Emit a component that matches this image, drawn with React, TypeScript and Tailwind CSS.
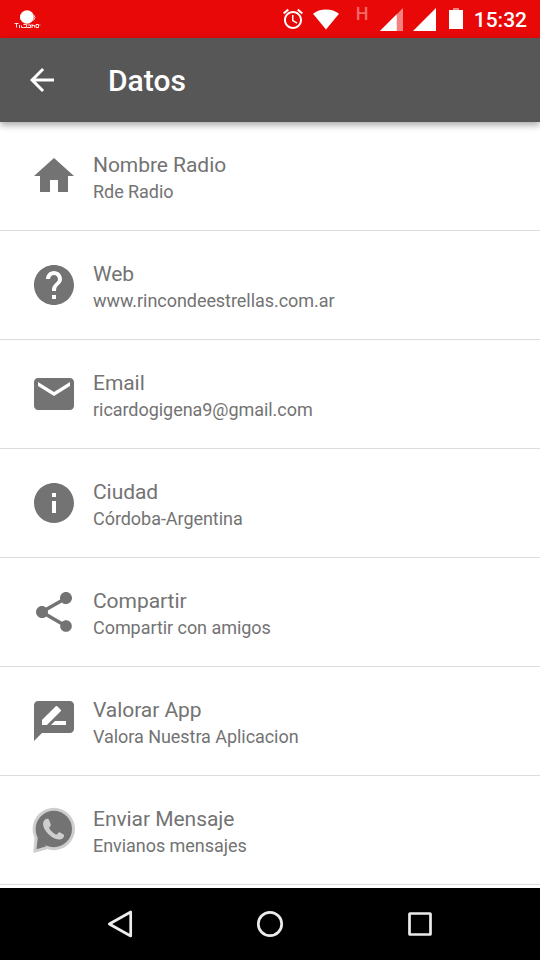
import type { ReactNode } from "react";

type IconName = "home" | "help" | "email" | "info" | "share" | "review";

const ICON_PATHS: Record<IconName, string> = {
  home: "M10 20v-6h4v6h5v-8h3L12 3 2 12h3v8z",
  help: "M12 2C6.48 2 2 6.48 2 12s4.48 10 10 10 10-4.48 10-10S17.52 2 12 2zm1 17h-2v-2h2v2zm2.07-7.75l-.9.92C13.45 12.9 13 13.5 13 15h-2v-.5c0-1.1.45-2.1 1.17-2.83l1.24-1.26c.37-.36.59-.86.59-1.41 0-1.1-.9-2-2-2s-2 .9-2 2H8c0-2.21 1.79-4 4-4s4 1.79 4 4c0 .88-.36 1.68-.93 2.25z",
  email: "M20 4H4c-1.1 0-1.99.9-1.99 2L2 18c0 1.1.9 2 2 2h16c1.1 0 2-.9 2-2V6c0-1.1-.9-2-2-2zm0 4l-8 5-8-5V6l8 5 8-5v2z",
  info: "M12 2C6.48 2 2 6.48 2 12s4.48 10 10 10 10-4.48 10-10S17.52 2 12 2zm1 15h-2v-6h2v6zm0-8h-2V7h2v2z",
  share:
    "M18 16.08c-.76 0-1.44.3-1.96.77L8.91 12.7c.05-.23.09-.46.09-.7s-.04-.47-.09-.7l7.05-4.11c.54.5 1.25.81 2.04.81 1.66 0 3-1.34 3-3s-1.34-3-3-3-3 1.34-3 3c0 .24.04.47.09.7L8.04 9.81C7.5 9.31 6.79 9 6 9c-1.66 0-3 1.34-3 3s1.34 3 3 3c.79 0 1.5-.31 2.04-.81l7.12 4.16c-.05.21-.08.43-.08.65 0 1.61 1.31 2.92 2.92 2.92 1.61 0 2.92-1.31 2.92-2.92s-1.31-2.92-2.92-2.92z",
  review:
    "M20 2H4c-1.1 0-1.99.9-1.99 2L2 22l4-4h14c1.1 0 2-.9 2-2V4c0-1.1-.9-2-2-2zM6 14v-2.47l6.88-6.88c.2-.2.51-.2.71 0l1.77 1.77c.2.2.2.51 0 .71L8.47 14H6zm12 0h-7.5l2-2H18v2z",
};

function MaterialIcon({ name }: { name: IconName }) {
  return (
    <svg viewBox="0 0 24 24" className="size-12 fill-[#737373]">
      <path d={ICON_PATHS[name]} />
    </svg>
  );
}

function WhatsAppIcon() {
  return (
    <svg viewBox="0 0 48 48" className="size-12">
      <g fill="#cecece">
        <circle cx="23.800" cy="23" r="21.200" />
        <path d="M4.500 31.500L3.300 47l14-3.700z" />
      </g>
      <g fill="#737373">
        <circle cx="23.800" cy="23" r="18.200" />
        <path d="M7.800 31L6.500 43.200l10-3z" />
      </g>
      <path
        fill="#cecece"
        d="M17 12.700c-1.300-.1-3.500 1.600-3.900 4.300-.4 3.300 1.500 7.200 4.900 10.800 3.700 3.800 8.200 6.300 12 5.700 2.700-.4 4.200-2.400 4.100-4.300 0-.6-4.100-3-4.800-3-.9 0-2 2.300-2.900 2.300-1.600 0-6.700-4.600-7.200-6.600-.2-.9 1.800-1.900 1.700-2.900-.1-.9-1.800-5.400-2.500-6-.3-.2-.8-.3-1.400-.3z"
      />
    </svg>
  );
}

interface Row {
  title: string;
  subtitle: string;
  icon: ReactNode;
}

const ROWS: Row[] = [
  { title: "Nombre Radio", subtitle: "Rde Radio", icon: <MaterialIcon name="home" /> },
  { title: "Web", subtitle: "www.rincondeestrellas.com.ar", icon: <MaterialIcon name="help" /> },
  { title: "Email", subtitle: "ricardogigena9@gmail.com", icon: <MaterialIcon name="email" /> },
  { title: "Ciudad", subtitle: "Córdoba-Argentina", icon: <MaterialIcon name="info" /> },
  { title: "Compartir", subtitle: "Compartir con amigos", icon: <MaterialIcon name="share" /> },
  { title: "Valorar App", subtitle: "Valora Nuestra Aplicacion", icon: <MaterialIcon name="review" /> },
  { title: "Enviar Mensaje", subtitle: "Envianos mensajes", icon: <WhatsAppIcon /> },
];

function StatusBar() {
  return (
    <div className="flex h-[38px] shrink-0 items-center bg-[#e90808] text-white">
      <svg viewBox="0 0 40 38" className="ml-2 h-[38px] w-10">
        <circle cx="19" cy="17" r="6.800" fill="white" />
        <path d="M25.500 14.500l1.500 3-1.500 3M12.500 14.500v5" fill="none" stroke="white" strokeWidth="0.800" />
        <path
          d="M6.500 23.500h4M8.500 24v3.500M11.500 25v3M13.500 25.500v2h2M15.500 24.500h3v3h-3M19.500 25h3v2.500h-3.500M24 24v4M24 25.500h2.500v2M28 24.500h2.500v3H28zM31.500 25h.800"
          fill="none"
          stroke="white"
          strokeWidth="0.900"
        />
      </svg>
      <div className="flex-1" />
      <svg viewBox="0 0 24 24" className="size-6 fill-white">
        <path d="M22 5.720l-4.600-3.860-1.290 1.530 4.600 3.860L22 5.720zM7.880 3.390L6.600 1.860 2 5.710l1.290 1.530 4.590-3.850zM12.500 8H11v6l4.750 2.850.75-1.230-4-2.370V8zM12 4c-4.970 0-9 4.030-9 9s4.020 9 9 9c4.970 0 9-4.030 9-9s-4.030-9-9-9zm0 16c-3.870 0-7-3.130-7-7s3.130-7 7-7 7 3.130 7 7-3.130 7-7 7z" />
      </svg>
      <svg viewBox="0 0 27 21" className="ml-2 h-[21px] w-[26px] fill-white">
        <path d="M13.500 21L0 4.500C3.500 1.600 8.300 0 13.500 0S23.500 1.600 27 4.500z" />
      </svg>
      <span className="mb-2.5 ml-[17px] w-3 text-[18px] font-medium leading-none text-[#f46a6a]">H</span>
      <svg viewBox="0 0 24 24" className="ml-3 h-[23px] w-[23px]">
        <path d="M24 0v24H0z" fill="#f58080" />
        <path d="M17.500 6.500V24H0z" fill="white" />
      </svg>
      <svg viewBox="0 0 24 24" className="ml-2.5 h-[23px] w-[23px]">
        <path d="M24 0v24H0z" fill="white" />
      </svg>
      <svg viewBox="0 0 14 21" className="mb-0.5 ml-[13px] h-[21px] w-3.5">
        <path d="M4 0h6v2H4z" fill="#f58080" />
        <path d="M0 2h14v19H0z" fill="white" />
      </svg>
      <span className="ml-[11px] mr-[13px] mt-0.5 text-[21px] font-medium leading-none">15:32</span>
    </div>
  );
}

function Toolbar() {
  return (
    <header className="relative z-10 flex h-[84px] shrink-0 items-center bg-[#575757] pl-6 text-white shadow-[0_3px_7px_rgba(0,0,0,0.35)]">
      <svg viewBox="0 0 24 24" className="size-9 fill-white">
        <path d="M20 11H7.830l5.590-5.590L12 4l-8 8 8 8 1.410-1.410L7.830 13H20v-2z" />
      </svg>
      <h1 className="ml-12 mt-0.5 text-[30px] font-medium leading-none">Datos</h1>
    </header>
  );
}

function ListRow({ title, subtitle, icon }: Row) {
  return (
    <li className="flex h-[109px] border-b border-[#dcdcdc] pl-[30px]">
      <div className="pt-[30px]">{icon}</div>
      <div className="ml-[15px] pt-[31px] text-[#737373]">
        <p className="text-[21px] leading-[25px] tracking-[-0.05px]">{title}</p>
        <p className="mt-[3px] text-[18px] leading-[21px] tracking-[-0.05px]">{subtitle}</p>
      </div>
    </li>
  );
}

function NavBar() {
  return (
    <nav className="flex h-[72px] shrink-0 items-center justify-center gap-[114px] bg-black">
      <svg viewBox="0 0 36 36" className="size-9 fill-none stroke-[#ececec] stroke-[2.7]" strokeLinejoin="round">
        <path d="M28.700 6v24L7.300 18z" />
      </svg>
      <svg viewBox="0 0 36 36" className="size-9 fill-none stroke-[#ececec] stroke-[2.7]">
        <circle cx="18" cy="18" r="11.700" />
      </svg>
      <svg viewBox="0 0 36 36" className="size-9 fill-none stroke-[#ececec] stroke-[2.7]">
        <rect x="7.500" y="7.500" width="21" height="21" rx="0.500" />
      </svg>
    </nav>
  );
}

export default function App() {
  return (
    <div className="flex h-[960px] w-[540px] flex-col overflow-hidden bg-white font-['Roboto',sans-serif]">
      <StatusBar />
      <Toolbar />
      <ul className="flex-1">
        {ROWS.map((row) => (
          <ListRow key={row.title} {...row} />
        ))}
      </ul>
      <NavBar />
    </div>
  );
}
